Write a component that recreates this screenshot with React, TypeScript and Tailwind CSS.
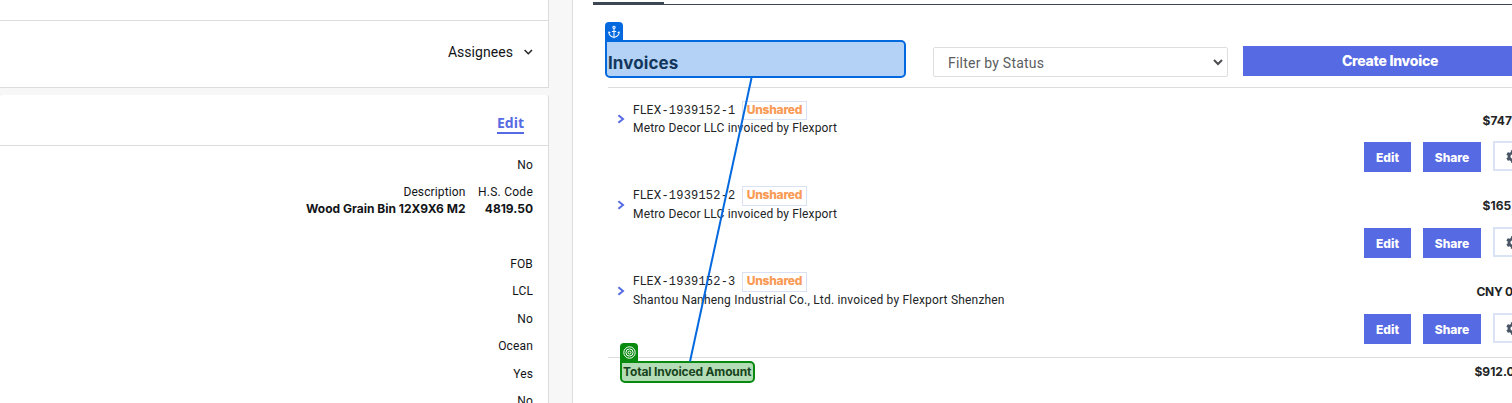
import { Anchor } from "lucide-react";
import { FaCog } from "react-icons/fa";

type Invoice = { id: string; desc: string; amount: string; amountLeft: string; descTracking: string; first?: boolean };

const invoices: Invoice[] = [
  { id: "-1939152-1", desc: "Metro Decor LLC invoiced by Flexport", amount: "$747", amountLeft: "ml-[118.5px]", descTracking: "tracking-[0.15px]", first: true },
  { id: "-1939152-2", desc: "Metro Decor LLC invoiced by Flexport", amount: "$165", amountLeft: "ml-[118.5px]", descTracking: "tracking-[0.15px]" },
  { id: "-1939152-3", desc: "Shantou Nanheng Industrial Co., Ltd. invoiced by Flexport Shenzhen", amount: "CNY 0", amountLeft: "ml-[112.5px]", descTracking: "tracking-[0.19px]" },
];

const details = ["FOB", "LCL", "No", "Ocean", "Yes", "No"];

function Chevron() {
  return (
    <svg width="8" height="10" viewBox="0 0 8 10" fill="none" stroke="#566ae3" strokeWidth="2">
      <path d="M1.4 1.2 L6 5 L1.4 8.8" />
    </svg>
  );
}

function LeftColumn() {
  return (
    <div className="flex w-[549px] shrink-0 flex-col font-[Roboto,sans-serif] text-[#121417]">
      <div className="h-[88px] border-r border-b border-[#dcdcdc] bg-white">
        <div className="h-[21px] border-b border-[#dcdcdc]" />
        <div className="flex h-[62px] items-center justify-end pr-[15px] text-[14px] tracking-[0.05px]">
          <span>Assignees</span>
          <svg className="ml-[10px]" width="10" height="6" viewBox="0 0 10 6" fill="none" stroke="#222" strokeWidth="1.5">
            <path d="M1.6 1 L5.3 4.7 L9 1" />
          </svg>
        </div>
      </div>
      <div className="mt-[7px] h-[308px] overflow-hidden rounded-t-[3px] border-r border-[#dcdcdc] bg-white">
        <div className="flex h-[51px] justify-end border-b border-[#dcdcdc] pt-[18px] pr-[24px]">
          <span className="h-[21px] border-b-2 border-[#566ae3] font-['Open_Sans',sans-serif] text-[14px] leading-[20px] font-bold text-[#566ae3]">Edit</span>
        </div>
        <div className="flex flex-col items-end pr-[15px] text-[12px] leading-[18px] tracking-[0.15px]">
          <div className="mt-[10px]">No</div>
          <div className="mt-[9px] flex gap-[12.5px] text-right">
            <div>
              <div className="tracking-[0.12px]">Description</div>
              <div className="-mt-px font-[Inter,sans-serif] font-bold tracking-normal">Wood Grain Bin 12X9X6 M2</div>
            </div>
            <div>
              <div className="tracking-[0.25px]">H.S. Code</div>
              <div className="-mt-px font-[Inter,sans-serif] font-bold tracking-normal">4819.50</div>
            </div>
          </div>
          <div className="mt-[37px] flex flex-col items-end">
            {details.map((d, i) => (
              <div key={i} className="h-[27.45px] whitespace-nowrap">{d}</div>
            ))}
          </div>
        </div>
      </div>
    </div>
  );
}

function InvoiceRow({ inv }: { inv: Invoice }) {
  return (
    <div className="flex h-[86px] shrink-0">
      <div className="w-[25px] shrink-0 pt-[26px] pl-[9px]"><Chevron /></div>
      <div className="w-[731px] shrink-0 whitespace-nowrap text-[12px] text-[#222426]">
        <div className={inv.first ? "flex h-[31px] pt-[13px]" : "flex h-[31px] pt-[12px]"}>
          <div className="w-[109px] leading-[18px] tracking-[0.25px]">
            FLEX<span className="font-['Liberation_Mono',monospace] tracking-[0.2px]">{inv.id}</span>
          </div>
          <span className={(inv.first ? "h-[19px]" : "h-[20px]") + " w-[65px] border border-[#d9e1f4] text-center font-[Inter,sans-serif] leading-[16px] font-extrabold tracking-[-0.25px] text-[#f99a55]"}>Unshared</span>
        </div>
        <div className={"leading-[18px] " + inv.descTracking}>{inv.desc}</div>
      </div>
      <div className="w-[210px] shrink-0 font-[Inter,sans-serif]">
        <div className={inv.first ? "h-[54px] pt-[24px]" : "h-[54px] pt-[23px]"}>
          <div className={"text-[12px] leading-[18px] font-bold whitespace-nowrap text-[#222426] " + inv.amountLeft + (inv.amount === "CNY 0" ? " tracking-[-0.3px]" : " tracking-[0.1px]")}>{inv.amount}</div>
        </div>
        <div className="flex text-[12px] leading-[31px] font-extrabold text-white">
          <button className="h-[30px] w-[47px] bg-[#566ae3]">Edit</button>
          <button className="ml-[12px] h-[30px] w-[58px] bg-[#566ae3]">Share</button>
          <button className="-mt-px ml-[12px] flex h-[30px] w-[44px] items-center border-2 border-[#d9e3f5] bg-white pt-px pl-[11px]">
            <FaCog className="text-[#4a5566]" size={13} />
          </button>
        </div>
      </div>
    </div>
  );
}

export default function App() {
  return (
    <div className="relative flex h-[403px] w-full overflow-hidden bg-[#f7f7f7] font-[Roboto,sans-serif]">
      <LeftColumn />
      <div className="ml-[23px] flex w-[940px] shrink-0 flex-col overflow-hidden border-l border-[#dcdcdc] bg-white">
        <div className="flex h-[5px] shrink-0 items-end pl-[20px]">
          <div className="h-[3px] w-[71px] bg-[#3d4653]" />
          <div className="h-px flex-1 bg-[#3d4653]" />
        </div>
        <div className="ml-[35px] flex h-[83px] w-[966px] shrink-0 border-b border-[#dcdcdc]">
          <h1 className="w-[325px] pt-[46px] font-[Inter,sans-serif] text-[17px] leading-[24px] font-bold tracking-[0.1px] text-[#1b1f24]">Invoices</h1>
          <div className="mt-[42px] flex h-[30px] w-[295px] items-center justify-between rounded-[2px] border border-[#dedede] pr-[4px] pl-[14px] text-[14px] tracking-[0.22px] text-[#5b5d60]">
            <span className="pt-[3px]">Filter by Status</span>
            <svg width="10" height="7" viewBox="0 0 10 7" fill="none" stroke="#4c4e51" strokeWidth="2">
              <path d="M1 1 L5 5 L9 1" />
            </svg>
          </div>
          <button className="mt-[41px] ml-[15px] h-[30px] w-[294px] bg-[#566ae3] font-[Inter,sans-serif] text-[14px] leading-[30px] font-extrabold tracking-[-0.25px] text-white">Create Invoice</button>
        </div>
        <div className="ml-[35px] h-[270px] w-[966px] shrink-0 border-b border-[#dcdcdc]">
          {invoices.map((inv) => <InvoiceRow key={inv.id} inv={inv} />)}
        </div>
        <div className="ml-[50px] flex pt-[5px] font-[Inter,sans-serif] text-[12px] leading-[18px] font-bold text-[#222426]">
          <span className="w-[851.5px] shrink-0 tracking-[-0.15px]">Total Invoiced Amount</span>
          <span>$912.0</span>
        </div>
      </div>

      <div className="absolute top-[40px] left-[605px] h-[38px] w-[301px] rounded-[5px] rounded-tl-none border-2 border-[#0469de] bg-[#0469de]/30" />
      <div className="absolute top-[22px] left-[605px] flex h-[19px] w-[18px] items-center justify-center rounded-t-[4px] bg-[#0469de]">
        <Anchor size={14} strokeWidth={1.8} color="#ffffff" />
      </div>
      <div className="absolute top-[361px] left-[620px] h-[22px] w-[135px] rounded-[5px] rounded-tl-none border-2 border-[#078a0e] bg-[#078a0e]/30" />
      <div className="absolute top-[343px] left-[620px] flex h-[19px] w-[18px] items-center justify-center rounded-t-[4px] bg-[#078a0e]">
        <svg width="13" height="13" viewBox="0 0 13 13" fill="none" stroke="#fff" strokeWidth="1">
          <circle cx="6.5" cy="6.5" r="5.7" />
          <circle cx="6.5" cy="6.5" r="3.6" />
          <circle cx="6.5" cy="6.5" r="1.5" />
        </svg>
      </div>
      <svg className="absolute top-[78px] left-[680px]" width="80" height="284" viewBox="0 0 80 284">
        <path d="M71.5 0 L10 283.5" stroke="#0469de" strokeWidth="2" />
      </svg>
    </div>
  );
}
